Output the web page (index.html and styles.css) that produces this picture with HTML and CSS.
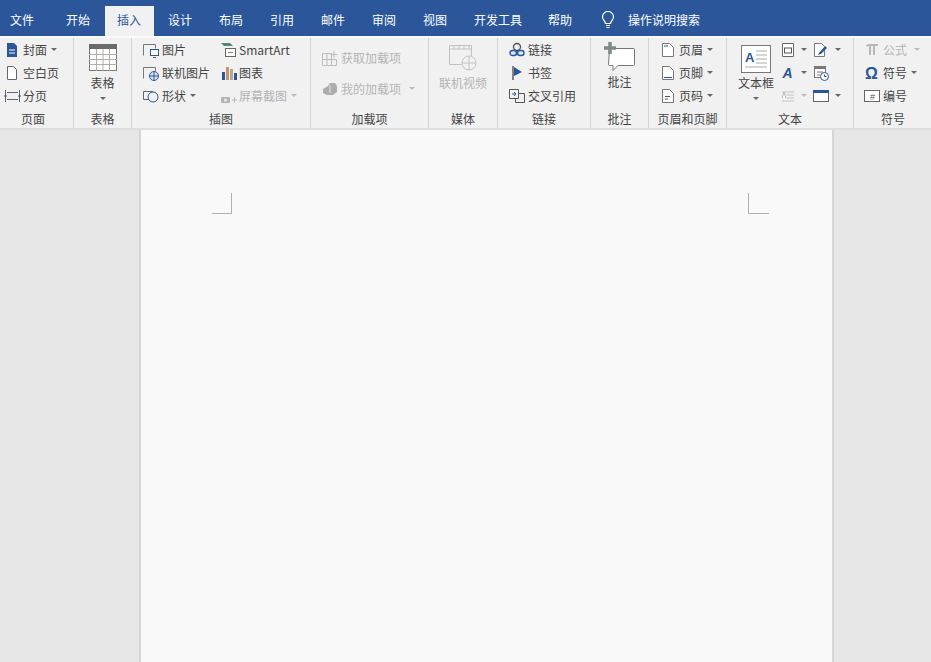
FILE: index.html
```html
<!DOCTYPE html>
<html lang="zh">
<head>
<meta charset="utf-8">
<title>Word</title>
<link rel="stylesheet" href="styles.css">
</head>
<body>
<nav class="tabs">
  <span class="tab first">文件</span>
  <span class="tab">开始</span>
  <span class="tab active">插入</span>
  <span class="tab">设计</span>
  <span class="tab">布局</span>
  <span class="tab">引用</span>
  <span class="tab">邮件</span>
  <span class="tab">审阅</span>
  <span class="tab">视图</span>
  <span class="tab">开发工具</span>
  <span class="tab">帮助</span>
  <svg class="bulb" viewBox="0 0 14 18" width="14" height="18" fill="none" stroke="#fff" stroke-width="1.2"><path d="M4.5 12.5C4.5 10 1.5 9 1.5 6a5.5 5.5 0 0 1 11 0c0 3-3 4-3 6.500zM5 14.500h4M5.500 16.500h3"/></svg>
  <span class="search">操作说明搜索</span>
</nav>

<section class="ribbon">
  <div class="group g-page">
    <div class="body col pad-page">
      <div class="row"><svg class="ic" viewBox="0 0 16 16"><path d="M3 1h7l3 3v11H3z" fill="#2b579a"/><path d="M5 8h6M5 11h6" stroke="#fff"/></svg><span>封面</span><i class="caret"></i></div>
      <div class="row"><svg class="ic" viewBox="0 0 16 16"><path d="M3.500 1.500h6l3 3v10h-9z" fill="#fff" stroke="#666"/></svg><span>空白页</span></div>
      <div class="row"><svg class="ic wide" viewBox="0 0 18 16" fill="none"><path d="M1.500 2v12M15.500 2v12" stroke="#666"/><path d="M3 4.500h11M3 11.500h11" stroke="#666"/><path d="M0 8h3M14 8h3" stroke="#2b579a"/></svg><span>分页</span></div>
    </div>
    <div class="label">页面</div>
  </div>

  <div class="group g-table">
    <div class="body big">
      <svg class="big-ic" viewBox="0 0 28 27" width="28" height="27"><rect x=".5" y=".5" width="27" height="26" fill="#fff" stroke="#777"/><rect width="28" height="5" fill="#6a6a6a"/><path d="M7.500 5v22M14 5v22M20.500 5v22M0 10.500h28M0 15.500h28M0 20.500h28" stroke="#b5aca6"/></svg>
      <span>表格</span><i class="caret"></i>
    </div>
    <div class="label">表格</div>
  </div>

  <div class="group g-illus">
    <div class="body two">
      <div class="col c-pic">
        <div class="row"><svg class="ic" viewBox="0 0 18 16" fill="none"><path d="M1.500 13.500v-11h12v4" stroke="#777"/><rect x="8.500" y="7.500" width="8" height="6" fill="#fff" stroke="#2b579a"/><path d="M11 15.500h3" stroke="#555"/></svg><span>图片</span></div>
        <div class="row"><svg class="ic" viewBox="0 0 18 16" fill="none"><path d="M1.500 13.500v-11h12v4" stroke="#777"/><circle cx="12" cy="11" r="4.500" fill="#dbe5f1" stroke="#2b579a"/><path d="M7.500 11h9M12 6.500v9" stroke="#2b579a"/></svg><span>联机图片</span></div>
        <div class="row"><svg class="ic" viewBox="0 0 18 16" fill="none"><path d="M1.500 3.500h9v8h-9z" stroke="#666"/><circle cx="11" cy="9" r="5" fill="#f1f1f1" stroke="#2b579a"/></svg><span>形状</span><i class="caret"></i></div>
      </div>
      <div class="col c-art">
        <div class="row"><svg class="ic" viewBox="0 0 18 16" fill="none"><path d="M1 1h9l3 3H4z" fill="#4f8a6e"/><rect x="5.500" y="6.500" width="10" height="8" fill="#fff" stroke="#666"/><path d="M8 10.500h5" stroke="#888"/></svg><span>SmartArt</span></div>
        <div class="row"><svg class="ic" viewBox="0 0 18 16"><rect x="2" y="7" width="3" height="8" fill="#2b579a"/><rect x="6" y="2" width="3" height="13" fill="#c4956a"/><rect x="10" y="4" width="3" height="11" fill="#b9a796"/><rect x="14" y="8" width="3" height="7" fill="#2b579a"/></svg><span>图表</span></div>
        <div class="row off"><svg class="ic" viewBox="0 0 18 16"><rect x="1" y="9" width="9" height="6" rx="1" fill="#b5b5b5"/><circle cx="5.500" cy="12" r="1.500" fill="#eee"/><path d="M12 12h5M14.500 9.500v5" stroke="#b5b5b5"/></svg><span>屏幕截图</span><i class="caret"></i></div>
      </div>
    </div>
    <div class="label">插图</div>
  </div>

  <div class="group g-addin">
    <div class="body col loose">
      <div class="row off"><svg class="ic" viewBox="0 0 16 16" fill="none" stroke="#bdbdbd"><path d="M.5 3.500h9v12h-9zM.5 9.500h14v6h-5M5 3.500v12M12 1v7M8.500 4.500h7"/></svg><span>获取加载项</span></div>
      <div class="row off"><svg class="ic" viewBox="0 0 16 16"><path d="M1 8l5-3 2-3h5l2 3v6l-4 3H5L1 12z" fill="#adadad"/><path d="M8 4v8" stroke="#e4e4e4"/></svg><span>我的加载项</span><i class="caret far"></i></div>
    </div>
    <div class="label">加载项</div>
  </div>

  <div class="group g-media">
    <div class="body big off">
      <svg class="big-ic" viewBox="0 0 30 27" width="30" height="27" fill="none" stroke="#c2c2c2"><path d="M1.500 20.500v-19h22v11M1.500 20.500h12M1.500 5h22M6 1.500V5M11 1.500V5M16 1.500V5M21 1.500V5"/><circle cx="21" cy="19" r="7" fill="#f1f1f1"/><path d="M14 19h14M21 12v14"/></svg>
      <span>联机视频</span>
    </div>
    <div class="label">媒体</div>
  </div>

  <div class="group g-link">
    <div class="body col">
      <div class="row"><svg class="ic" viewBox="0 0 16 16" fill="none"><circle cx="8" cy="5" r="3.500" stroke="#555" stroke-width="1.400"/><rect x="1" y="8.500" width="6.500" height="5" rx="2.500" fill="#dbe5f1" stroke="#2b579a" stroke-width="1.400"/><rect x="8.500" y="8.500" width="6.500" height="5" rx="2.500" fill="#dbe5f1" stroke="#2b579a" stroke-width="1.400"/></svg><span>链接</span></div>
      <div class="row"><svg class="ic" viewBox="0 0 16 16"><path d="M4 1v14" stroke="#555" stroke-width="1.400"/><path d="M5 2l8 5-8 4z" fill="#2b579a"/></svg><span>书签</span></div>
      <div class="row"><svg class="ic" viewBox="0 0 16 16" fill="none" stroke="#555"><path d="M.5 1.500h9v9h-9zM9.500 5.500h6v9h-9v-4"/><path d="M3 6h4M5 4l2 2-2 2" stroke="#2b579a"/></svg><span>交叉引用</span></div>
    </div>
    <div class="label">链接</div>
  </div>

  <div class="group g-comment">
    <div class="body big tall">
      <svg class="big-ic" viewBox="0 0 31 30" width="31" height="30" fill="none"><path d="M5.500 6.500h24a1 1 0 0 1 1 1v15a1 1 0 0 1-1 1H14l-5 5v-5H5.500a1 1 0 0 1-1-1z" fill="#fff" stroke="#777"/><path d="M6 0v12M0 6h12" stroke="#7d8a86" stroke-width="3.500"/></svg>
      <span>批注</span>
    </div>
    <div class="label">批注</div>
  </div>

  <div class="group g-hf">
    <div class="body col">
      <div class="row"><svg class="ic" viewBox="0 0 16 16" fill="none"><path d="M2.500 1.500h7l4 4v9h-11z" fill="#fff" stroke="#777"/><path d="M4 4h4" stroke="#2b579a"/></svg><span>页眉</span><i class="caret"></i></div>
      <div class="row"><svg class="ic" viewBox="0 0 16 16" fill="none"><path d="M2.500 1.500h7l4 4v9h-11z" fill="#fff" stroke="#777"/><path d="M4 12.500h8" stroke="#2b579a"/></svg><span>页脚</span><i class="caret"></i></div>
      <div class="row"><svg class="ic" viewBox="0 0 16 16" fill="none"><path d="M2.500 1.500h7l4 4v9h-11z" fill="#fff" stroke="#777"/><path d="M5 8.500h5M5 11h3" stroke="#555"/></svg><span>页码</span><i class="caret"></i></div>
    </div>
    <div class="label">页眉和页脚</div>
  </div>

  <div class="group g-text">
    <div class="body two">
      <div class="big tb">
        <svg class="big-ic" viewBox="0 0 30 28" width="30" height="28" fill="none"><rect x=".5" y=".5" width="29" height="27" fill="#fff" stroke="#777"/><text x="4" y="17" class="svg-a">A</text><path d="M15 6h11M15 10h11M15 14h11M15 18h11M4 22h22" stroke="#aaa"/></svg>
        <span>文本框</span><i class="caret"></i>
      </div>
      <div class="col c-t1">
        <div class="row"><svg class="ic sm" viewBox="0 0 14 16" fill="none"><path d="M1.500 1.500h11v13h-11z" fill="#fff" stroke="#666"/><rect x="3.500" y="6" width="7" height="5" stroke="#555"/></svg><i class="caret"></i></div>
        <div class="row"><svg class="ic sm" viewBox="0 0 14 16"><text x="1.500" y="13" class="svg-wa">A</text></svg><i class="caret"></i></div>
        <div class="row off"><svg class="ic sm" viewBox="0 0 14 16"><path d="M1 4h12M6 7h7M6 10h7M1 13h12" stroke="#c4c4c4"/><path d="M1 10l2-6 2 6" fill="none" stroke="#bbb"/></svg><i class="caret"></i></div>
      </div>
      <div class="col c-t2">
        <div class="row"><svg class="ic" viewBox="0 0 16 16" fill="none"><path d="M1.500 1.500h7l3 3v10h-10z" fill="#fff" stroke="#777"/><path d="M6 11l6-7 2 2-6 6-3 1z" fill="#2b579a"/></svg><i class="caret"></i></div>
        <div class="row"><svg class="ic" viewBox="0 0 16 16" fill="none"><rect x="1.500" y="1.500" width="11" height="11" fill="#fff" stroke="#777"/><rect x="1" y="1" width="12" height="3" fill="#777"/><path d="M4 7h6M4 10h3" stroke="#777"/><circle cx="11.500" cy="11.500" r="4" fill="#fff" stroke="#2b579a"/><path d="M11.500 9.500v2h2" stroke="#2b579a"/></svg></div>
        <div class="row"><svg class="ic" viewBox="0 0 16 16" fill="none"><rect x=".5" y="2.500" width="15" height="11" fill="#fff" stroke="#666"/><rect y="2" width="16" height="3" fill="#2b579a"/></svg><i class="caret"></i></div>
      </div>
    </div>
    <div class="label">文本</div>
  </div>

  <div class="group g-symbol">
    <div class="body col">
      <div class="row off"><svg class="ic" viewBox="0 0 16 16"><path d="M2 4c1-2 2-2 4-2h8v2h-3v9H9V4H7v9H5V4c-1 0-2 0-2 1z" fill="#b8b8b8"/></svg><span>公式</span><i class="caret far2"></i></div>
      <div class="row"><svg class="ic" viewBox="0 0 16 16"><text x="1" y="14" class="svg-om">Ω</text></svg><span>符号</span><i class="caret"></i></div>
      <div class="row"><svg class="ic" viewBox="0 0 16 16" fill="none"><rect x=".5" y="2.500" width="15" height="11" fill="#fff" stroke="#666"/><text x="6" y="11.500" class="svg-n">#</text></svg><span>编号</span></div>
    </div>
    <div class="label">符号</div>
  </div>
</section>

<main class="desk">
  <div class="page">
    <div class="mark left"></div>
    <div class="mark right"></div>
  </div>
</main>
</body>
</html>
```

FILE: styles.css
```css
* { box-sizing: border-box; }
html, body { margin: 0; height: 100%; }
body {
  width: 931px;
  height: 662px;
  overflow: hidden;
  display: flex;
  flex-direction: column;
  background: #e6e6e6;
  color: #444;
  font: 12px/16px "Noto Sans CJK SC", "Liberation Sans", sans-serif;
}

.tabs {
  height: 36px;
  flex: none;
  display: flex;
  align-items: flex-end;
  background: #2b579a;
  color: #fff;
}
.tab { height: 30px; padding-left: 12px; line-height: 28px; width: 51px; flex: none; white-space: nowrap; }
.tab:nth-child(10) { width: 74px; }
.tab.first { width: 54px; padding-left: 10px; }
.tab.active { width: 49px; margin-right: 2px; background: #f1f1f1; color: #2b579a; }
.bulb { margin: 0 13px 7px 14px; flex: none; }
.search { height: 30px; line-height: 28px; }

.ribbon {
  height: 94px;
  flex: none;
  display: flex;
  background: #f1f1f1;
  border-top: 2px solid #fafafa;
  border-bottom: 2px solid #dedede;
}
.group {
  flex: none;
  height: 90px;
  display: flex;
  flex-direction: column;
  border-right: 1px solid #d4d4d4;
}
.body { height: 71px; flex: none; }
.label { text-align: center; height: 19px; line-height: 19px; }
.g-page { width: 74px; }
.g-page .label { padding-right: 7px; }
.g-table { width: 58px; }
.g-illus { width: 179px; }
.g-addin { width: 118px; }
.g-media { width: 69px; }
.g-link { width: 93px; }
.g-comment { width: 58px; }
.g-hf { width: 78px; }
.g-text { width: 127px; }
.g-symbol { width: 78px; border-right: 0; }

.col { display: flex; flex-direction: column; }
.two { display: flex; }
.row { height: 23px; display: flex; align-items: center; white-space: nowrap; flex: none; }
.ic { width: 16px; height: 16px; flex: none; margin-right: 3px; }
.ic.sm { width: 14px; margin-right: 2px; }
.ic.wide { width: 18px; margin-right: 1px; }
.c-pic .ic { width: 18px; margin-right: 2px; }
.c-art .ic { width: 18px; margin-right: 1px; }
.c-t2 .ic { margin-right: 2px; }
.off { color: #b4b4b4; }
.caret {
  display: block;
  flex: none;
  width: 0;
  height: 0;
  margin-left: 4px;
  border: 3px solid transparent;
  border-top-color: #666;
  border-bottom: 0;
}
.off .caret { border-top-color: #bbb; }
.caret.far { margin-left: 8px; }
.caret.far2 { margin-left: 7px; }

.pad-page { padding-left: 4px; }
.g-link .body { padding-left: 11px; }
.g-hf .body { padding-left: 11px; }
.g-symbol .body { padding-left: 10px; }
.g-addin .body { padding: 8px 0 0 11px; gap: 8px; }
.c-pic { margin-left: 10px; width: 78px; }
.c-art { width: 90px; }

.big { display: flex; flex-direction: column; align-items: center; padding-top: 6px; }
.big > span { margin-top: 4px; line-height: 16px; white-space: nowrap; }
.big > .caret { margin: 6px 0 0; }
.big.tall { padding-top: 4px; }
.big.tall > span { margin-top: 2px; }
.big-ic { flex: none; }
.tb { width: 54px; margin-left: 2px; padding-top: 7px; flex: none; }
.tb > span { margin-top: 2px; }
.c-t1 { width: 32px; margin-left: -2px; }
.c-t2 { width: 36px; }

.svg-a { font: 700 13px "Liberation Sans", sans-serif; fill: #2b579a; }
.svg-wa { font: italic 700 14px "Liberation Sans", sans-serif; fill: #2b579a; }
.svg-om { font: 700 16px "Liberation Sans", sans-serif; fill: #2b579a; }
.svg-n { font: 9px "Liberation Sans", sans-serif; fill: #555; }

.desk { flex: 1; display: flex; padding-left: 139px; }
.page {
  width: 695px;
  height: 100%;
  display: flex;
  justify-content: space-between;
  align-items: flex-start;
  padding: 63px 63px 0 71px;
  background: #f9f9f9;
  border-left: 2px solid #d6d6d6;
  border-right: 2px solid #d6d6d6;
}
.mark { width: 20px; height: 21px; border-bottom: 1px solid #b0b0b0; }
.mark.left { border-right: 1px solid #b0b0b0; }
.mark.right { width: 21px; border-left: 1px solid #b0b0b0; }
```
